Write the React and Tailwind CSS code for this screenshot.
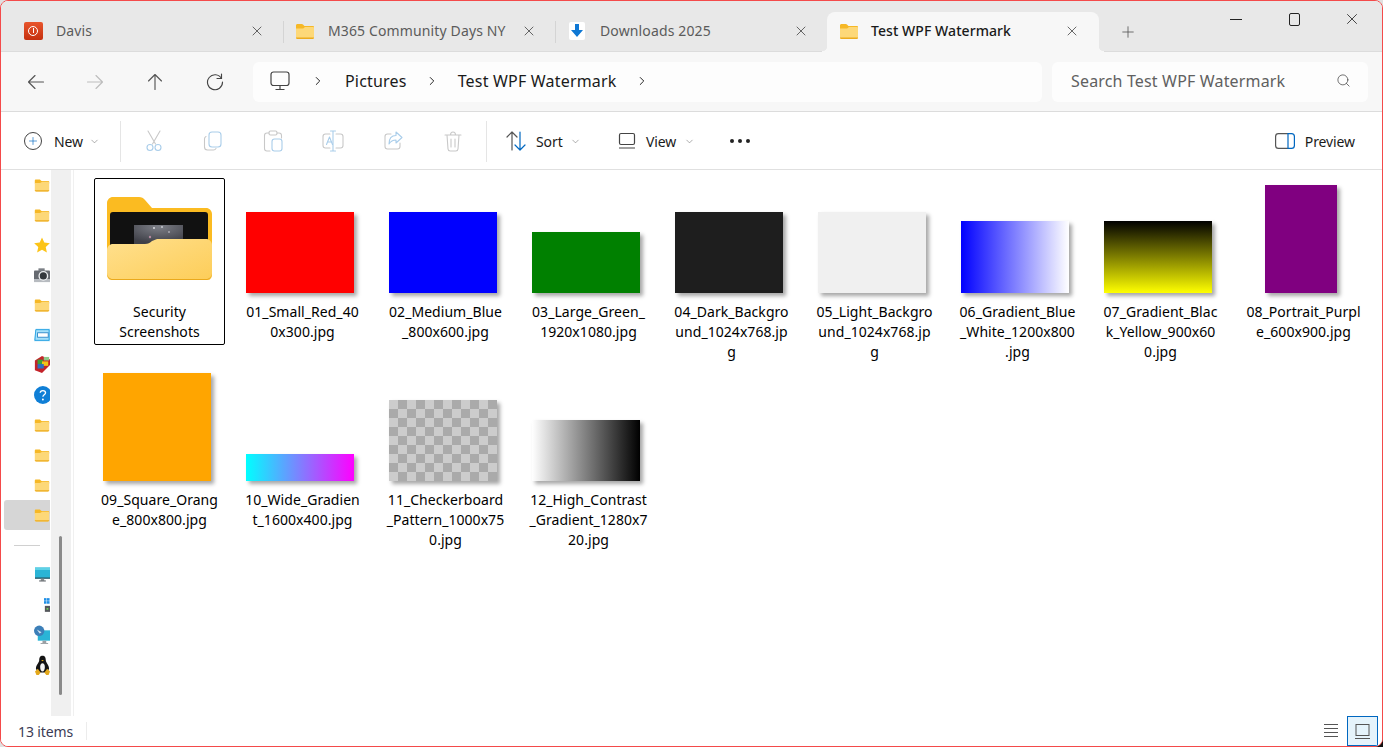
import React from 'react';
import { ChevronDown, ChevronRight, X, Plus, Search } from 'lucide-react';

const BLUE = '#0067c0';
const DIS = '#c8c8c8';
const DISB = '#a9cdea';

function TabFolder({ className = '' }) {
  return (
    <svg className={className} width="20" height="18" viewBox="0 0 20 18">
      <path d="M1 3.500C1 2.700 1.600 2 2.400 2h4.400c.5 0 .9.2 1.200.6L9.400 4H18c.6 0 1 .5 1 1v2H1z" fill="#f6b826" />
      <path d="M1 6.500h6.500c.5 0 .9-.2 1.300-.6L10 5h8c.6 0 1 .4 1 1v9.500c0 .8-.6 1.500-1.400 1.500H2.400C1.600 17 1 16.300 1 15.500z" fill="#fdd878" />
      <path d="M1 15.500h18c0 .8-.6 1.500-1.400 1.500H2.400C1.600 17 1 16.300 1 15.500z" fill="#ecab1e" />
    </svg>
  );
}

function Tab({ icon, label, active }) {
  if (active) {
    return (
      <div className="relative z-10 -mb-px flex h-[40px] w-[272px] items-center rounded-t-lg bg-[#f7f7f7] pb-[3px] pl-[12px] text-[#1a1a1a]">
        {/* flared corners where the tab meets the address row */}
        <div className="absolute -left-[5px] bottom-0 h-[6px] w-[5px] bg-[radial-gradient(circle_at_0_0,#e8e8e8_5px,#f7f7f7_5.5px)]" />
        <div className="absolute -right-[5px] bottom-0 h-[6px] w-[5px] bg-[radial-gradient(circle_at_100%_0,#e8e8e8_5px,#f7f7f7_5.5px)]" />
        <div className="flex w-[20px] justify-center">{icon}</div>
        <span className="ml-[12px] w-[193px] whitespace-nowrap text-[14px] font-medium tracking-[0.07px]">{label}</span>
        <X size={16} strokeWidth={1.1} color="#333" />
      </div>
    );
  }
  return (
    <div className="flex h-[39px] w-[271px] items-center pb-[2px] pl-[11px] text-[#5b5b5b]">
      <div className="flex w-[20px] justify-center">{icon}</div>
      <span className="ml-[13px] w-[193px] whitespace-nowrap text-[14px] tracking-[0.13px]">{label}</span>
      <X size={16} strokeWidth={1.1} color="#333" />
    </div>
  );
}

function ToolIcon({ children, w = 20 }) {
  return (
    <svg width={w} height="22" viewBox={`0 0 ${w} 22`} fill="none" strokeWidth="1.1" strokeLinecap="round" strokeLinejoin="round">
      {children}
    </svg>
  );
}

function Cut() {
  return (
    <ToolIcon>
      <path d="M4 1l7.500 13M16 1L8.500 14" stroke={DIS} />
      <circle cx="6" cy="17.500" r="3" stroke={DISB} />
      <circle cx="14" cy="17.500" r="3" stroke={DISB} />
    </ToolIcon>
  );
}
function CopyI() {
  return (
    <ToolIcon>
      <path d="M3 6.500C2 7 1.500 8 1.500 9v8c0 2 1 3 3 3h6c1.200 0 2-.6 2.500-1.500" stroke={DIS} />
      <rect x="6" y="2" width="12" height="15" rx="3" stroke={DISB} />
    </ToolIcon>
  );
}
function Paste() {
  return (
    <ToolIcon>
      <path d="M6 3H4C2.500 3 1.500 4 1.500 5.500v13C1.500 20 2.500 21 4 21h3M14 3h2c1.500 0 2.500 1 2.500 2.500V8" stroke={DIS} />
      <rect x="6" y="1" width="8" height="4" rx="1.500" stroke={DIS} />
      <rect x="9" y="9" width="10" height="12" rx="2.500" stroke={DISB} />
    </ToolIcon>
  );
}
function Rename() {
  return (
    <ToolIcon w={22}>
      <path d="M8 4H3.500C2 4 1 5 1 6.500v9C1 17 2 18 3.500 18H8M14 4h4.500C20 4 21 5 21 6.500v9c0 1.500-1 2.500-2.500 2.500H14" stroke={DIS} />
      <path d="M11 1v20M8.500 1h5M8.500 21h5" stroke={DISB} />
      <path d="M4.500 14.500L7.500 7l3 7.500M5.500 12h4" stroke={DISB} />
    </ToolIcon>
  );
}
function Share() {
  return (
    <ToolIcon>
      <path d="M8 4H4.500C3 4 2 5 2 6.500v10C2 18 3 19 4.500 19h10c1.500 0 2.500-1 2.500-2.500V13" stroke={DIS} />
      <path d="M13 2l6 5.500-6 5.500V10c-3.500 0-5.500 1.500-7 4 0-5 2.500-8.500 7-8.500z" stroke={DISB} />
    </ToolIcon>
  );
}
function Trash() {
  return (
    <ToolIcon>
      <path d="M2 5h16M7.500 5c0-2 1-3 2.500-3s2.500 1 2.500 3M4 5l1 14c.1 1.200 1 2 2.200 2h5.600c1.200 0 2.100-.8 2.200-2l1-14M8 9v8M12 9v8" stroke={DIS} />
    </ToolIcon>
  );
}

function Sep() {
  return <div className="h-[41px] w-px bg-[#e5e5e5]" />;
}

function NavArrow({ color, rotate = '' }) {
  return (
    <svg className={rotate} width="18" height="18" viewBox="0 0 18 18" fill="none" stroke={color} strokeWidth="1.150" strokeLinecap="round" strokeLinejoin="round">
      <path d="M16.500 9h-15M8 2.500L1.500 9 8 15.500" />
    </svg>
  );
}

function DimChevron() {
  return <ChevronDown size={11} strokeWidth={1.3} color="#777" />;
}

function SideFolder() {
  return <TabFolder />;
}
function Star() {
  return (
    <svg width="18" height="18" viewBox="0 0 18 18">
      <path d="M9 .5l2.600 5.800 6.200.7-4.600 4.200 1.300 6.200L9 14.300l-5.500 3.100 1.300-6.200L.2 7l6.200-.7z" fill="#fcc419" />
    </svg>
  );
}
function Camera() {
  return (
    <svg width="18" height="16" viewBox="0 0 18 16">
      <rect x="0" y="3" width="18" height="13" rx="1" fill="#666a70" />
      <rect x="5" y="0.500" width="7" height="3" fill="#7b7f85" />
      <rect x="0" y="12.500" width="18" height="3.500" fill="#b7bbc0" />
      <circle cx="10.500" cy="9" r="5.500" fill="#eef0f2" />
      <circle cx="10.500" cy="9" r="4" fill="#34383d" />
    </svg>
  );
}
function DriveBlue() {
  return (
    <svg width="18" height="14" viewBox="0 0 18 14">
      <path d="M2 0h16v14H0z" fill="#a5e0fa" />
      <path d="M2 1h15v12H1z" fill="none" stroke="#1e9de0" />
      <rect x="4" y="4.500" width="12" height="5" fill="#fff" stroke="#2a86c8" />
    </svg>
  );
}
function Cube() {
  return (
    <svg width="18" height="19" viewBox="0 0 18 19">
      <path d="M1 5l8-5 9 4v6L9 19l-8-3z" fill="#c4232a" />
      <rect x="4" y="4" width="6" height="5" fill="#3fa037" />
      <rect x="9" y="6" width="7" height="5" fill="#f2c51a" />
      <rect x="4" y="9" width="7" height="5" fill="#2d6fc2" />
      <rect x="11" y="1" width="6" height="4" fill="#8fc98a" />
    </svg>
  );
}
function Help() {
  return (
    <svg width="18" height="20" viewBox="0 0 18 20">
      <circle cx="10" cy="10" r="10" fill="#0f7fd6" />
      <path d="M7 7.500C7 5.800 8.300 5 10 5s3 .9 3 2.500c0 2.300-3 2.300-3 4.500" fill="none" stroke="#fff" strokeWidth="1.500" />
      <circle cx="10" cy="15" r="1.100" fill="#fff" />
    </svg>
  );
}
function Monitor() {
  return (
    <svg width="18" height="18" viewBox="0 0 18 18">
      <rect x="0" y="0" width="18" height="13" fill="#2ab4d6" />
      <path d="M0 0h18v3H0z" fill="#5ed1e6" />
      <rect x="0" y="12" width="18" height="1.500" fill="#24505f" />
      <rect x="7" y="13.500" width="4" height="2.500" fill="#8a8f94" />
      <rect x="5" y="15.500" width="8" height="1.300" fill="#5e6368" />
    </svg>
  );
}
function WinDrive() {
  return (
    <svg className="ml-[9px]" width="7" height="16" viewBox="0 0 7 16">
      <rect x="0" y="0" width="3" height="3" fill="#1f8fe6" />
      <rect x="3.500" y="0" width="3" height="3" fill="#1f8fe6" />
      <rect x="0" y="3.500" width="3" height="3" fill="#1f8fe6" />
      <rect x="3.500" y="3.500" width="3" height="3" fill="#1f8fe6" />
      <rect x="1" y="9" width="6" height="7" fill="#55585c" />
      <rect x="3" y="11.500" width="2" height="2" fill="#6fd35a" />
    </svg>
  );
}
function NetMonitor() {
  return (
    <svg width="17" height="21" viewBox="0 0 17 21">
      <rect x="4" y="5" width="13" height="11" fill="#2ab4d6" />
      <rect x="9" y="16" width="4" height="2.500" fill="#9a9fa4" />
      <rect x="7" y="18.500" width="8" height="1" fill="#9a9fa4" />
      <circle cx="5.500" cy="5.500" r="5.500" fill="#3c7fb8" />
      <path d="M3 4l5 3-2 1.500z" fill="#d7e6f2" />
    </svg>
  );
}
function Tux() {
  return (
    <svg width="16" height="21" viewBox="0 0 16 21">
      <path d="M8 0c3 0 3.500 2.500 3.500 5 0 2.500 3.500 5 3.500 9l-2 4H3l-2-4c0-4 3.500-6.500 3.500-9C4.500 2.500 5 0 8 0z" fill="#141414" />
      <path d="M5.500 12c0-2.500 1-4 2.500-4s2.500 1.500 2.500 4-1 5-2.500 5-2.500-2.500-2.500-5z" fill="#f4f4f4" />
      <path d="M6.500 4.500h3L8 6z" fill="#e3a81c" />
      <path d="M0 17l3-3 3 4-2 2.500H1.500zM16 17l-3-3-3 4 2 2.500h2.500z" fill="#e3a81c" />
    </svg>
  );
}

const sideRows = [
  <SideFolder />, <SideFolder />, <Star />, <Camera />, <SideFolder />, <DriveBlue />, <Cube />, <Help />,
  <SideFolder />, <SideFolder />, <SideFolder />,
];

function BigFolder() {
  return (
    <svg width="105" height="83" viewBox="0 0 105 83">
      <defs>
        <linearGradient id="fr" x1="0" y1="0" x2="1" y2="1">
          <stop offset="0" stopColor="#ffe08e" />
          <stop offset="1" stopColor="#fdcd58" />
        </linearGradient>
        <radialGradient id="ph" cx="0.5" cy="0.1" r="0.8">
          <stop offset="0" stopColor="#7d7f87" />
          <stop offset="1" stopColor="#3f4048" />
        </radialGradient>
      </defs>
      <path d="M0 6C0 2.700 2.700 0 6 0h26c2.500 0 4.500 1 6 3l7 8h54c3.300 0 6 2.700 6 6v40H0z" fill="#fbbb21" />
      <rect x="3" y="15" width="98" height="40" rx="3" fill="#111" />
      <rect x="27" y="28" width="49" height="20" fill="url(#ph)" />
      <circle cx="47" cy="31" r="1" fill="#d8d8de" />
      <circle cx="55" cy="30" r="1" fill="#c6c8d0" />
      <circle cx="62" cy="35" r="1" fill="#a8a9b2" />
      <circle cx="43" cy="40" r="1.200" fill="#b48aa0" />
      <path d="M0 53c0-3.300 2.700-6 6-6h32c3 0 5-1 7-3l2-.8c1.500-.8 3-1.200 5-1.200h47c3.300 0 6 2.700 6 6v30c0 3.300-2.700 6-6 6H6c-3.300 0-6-2.700-6-6z" fill="url(#fr)" />
      <path d="M0 77c0 3.300 2.700 6 6 6h93c3.300 0 6-2.700 6-6v-1c0 3.300-2.700 6-6 6H6c-3.300 0-6-2.700-6-6z" fill="#eaa91c" />
    </svg>
  );
}

const shadow = 'shadow-[3px_3px_4px_rgba(0,0,0,0.35)]';

const files = [
  { thumb: 'h-[81px] w-[108px] bg-[#ff0000]', lines: ['01_Small_Red_40', '0x300.jpg'] },
  { thumb: 'h-[81px] w-[108px] bg-[#0000ff]', lines: ['02_Medium_Blue', '_800x600.jpg'] },
  { thumb: 'h-[61px] w-[108px] bg-[#008000]', lines: ['03_Large_Green_', '1920x1080.jpg'] },
  { thumb: 'h-[81px] w-[108px] bg-[#1e1e1e]', lines: ['04_Dark_Backgro', 'und_1024x768.jp', 'g'] },
  { thumb: 'h-[81px] w-[108px] bg-[#f0f0f0]', lines: ['05_Light_Backgro', 'und_1024x768.jp', 'g'] },
  { thumb: 'h-[72px] w-[108px] bg-[linear-gradient(to_right,#0000ff,#ffffff)]', lines: ['06_Gradient_Blue', '_White_1200x800', '.jpg'] },
  { thumb: 'h-[72px] w-[108px] bg-[linear-gradient(to_bottom,#000000,#ffff00)]', lines: ['07_Gradient_Blac', 'k_Yellow_900x60', '0.jpg'] },
  { thumb: 'h-[108px] w-[72px] bg-[#800080]', lines: ['08_Portrait_Purpl', 'e_600x900.jpg'] },
  { thumb: 'h-[108px] w-[108px] bg-[#ffa500]', lines: ['09_Square_Orang', 'e_800x800.jpg'] },
  { thumb: 'h-[27px] w-[108px] bg-[linear-gradient(to_right,#00ffff,#ff00ff)]', lines: ['10_Wide_Gradien', 't_1600x400.jpg'] },
  { thumb: 'h-[81px] w-[108px] bg-[repeating-conic-gradient(#aaaaaa_0_25%,#cccccc_0_50%)] bg-[length:18px_18px]', lines: ['11_Checkerboard', '_Pattern_1000x75', '0.jpg'] },
  { thumb: 'h-[61px] w-[108px] bg-[linear-gradient(to_right,#ffffff,#000000)]', lines: ['12_High_Contrast', '_Gradient_1280x7', '20.jpg'] },
];

function Label({ lines }) {
  return (
    <div className="pt-[9px] text-center text-[14px] leading-[20px] tracking-[0.05px] text-black">
      {lines.map((l) => (
        <div key={l} className="whitespace-nowrap">{l}</div>
      ))}
    </div>
  );
}

export default function App() {
  return (
    <div className="h-[747px] w-[1383px] overflow-hidden bg-[linear-gradient(135deg,#e0e0e0_99.5%,#111111_99.5%)] font-['Noto_Sans','Open_Sans',sans-serif]">
      <div className="flex h-full flex-col overflow-hidden rounded-lg border border-[#f44a4a] bg-white">
        {/* tabs */}
        <div className="flex h-[50px] shrink-0 bg-[#e8e8e8] pl-[11px]">
          <div className="flex items-end">
            <Tab
              label="Davis"
              icon={
                <div className="flex h-[18px] w-[19px] items-center justify-center rounded-[2px] bg-[linear-gradient(to_bottom,#e8552c,#c5300f)]">
                  <div className="flex h-[10px] w-[10px] items-center justify-center rounded-full border border-white">
                    <div className="h-[5px] w-px bg-white" />
                  </div>
                </div>
              }
            />
            <div className="mb-[8px] h-[22px] w-px bg-[#d4d4d4]" />
            <Tab label="M365 Community Days NY" icon={<TabFolder />} />
            <div className="mb-[8px] h-[22px] w-px bg-[#d4d4d4]" />
            <Tab
              label="Downloads 2025"
              icon={
                <div className="flex h-[18px] w-[16px] items-center justify-center rounded-[2px] bg-white">
                  <svg width="12" height="13" viewBox="0 0 12 13"><path d="M4 0h4v6h4l-6 7-6-7h4z" fill="#0f78d4" /></svg>
                </div>
              }
            />
            <Tab active label="Test WPF Watermark" icon={<TabFolder />} />
          </div>
          <div className="ml-[20px] flex h-[50px] items-end pb-[10px]">
            <Plus size={18} strokeWidth={1.1} color="#555" />
          </div>
          <div className="ml-auto flex h-[36px] items-center">
            <div className="flex w-[58px] justify-center pr-[2px]"><div className="h-px w-[12px] bg-[#222]" /></div>
            <div className="flex w-[58px] justify-center pr-[2px]"><div className="h-[13px] w-[11px] rounded-[2px] border border-[#222]" /></div>
            <div className="flex w-[58px] justify-center pr-[2px]"><X size={18} strokeWidth={1.1} color="#222" /></div>
          </div>
        </div>

        {/* nav */}
        <div className="flex h-[61px] shrink-0 items-center border-t border-b border-[#dcdcdc] bg-[#f7f7f7] pl-[5px]">
          <div className="flex w-[59px] justify-center"><NavArrow color="#555" /></div>
          <div className="flex w-[60px] justify-center"><NavArrow color="#bdbdbd" rotate="rotate-180" /></div>
          <div className="flex w-[60px] justify-center"><NavArrow color="#555" rotate="rotate-90" /></div>
          <div className="flex w-[60px] justify-center">
            <svg width="18" height="18" viewBox="0 0 18 18" fill="none" stroke="#444" strokeWidth="1.150" strokeLinecap="round">
              <path d="M15.500 5.500A7.500 7.500 0 1 0 16.500 9" />
              <path d="M11 5.500h4.500V1" />
            </svg>
          </div>
          <div className="ml-[8px] flex h-[40px] w-[789px] items-center rounded-md bg-[#fdfdfd] pb-[2px] pl-[17px] text-[16px] tracking-[0.19px] text-[#1a1a1a]">
            <svg width="20" height="20" viewBox="0 0 20 20" fill="none" stroke="#444" strokeWidth="1.200">
              <rect x="1" y="1" width="18" height="13.500" rx="2.500" />
              <path d="M10 15v3M5.500 18.500h9" />
            </svg>
            <ChevronRight className="ml-[21px]" size={14} strokeWidth={1.7} color="#222" />
            <span className="ml-[20px]">Pictures</span>
            <ChevronRight className="ml-[18px]" size={14} strokeWidth={1.7} color="#222" />
            <span className="ml-[19px]">Test WPF Watermark</span>
            <ChevronRight className="ml-[18px]" size={14} strokeWidth={1.7} color="#222" />
          </div>
          <div className="ml-[10px] flex h-[40px] w-[316px] items-center rounded-md bg-[#fdfdfd] pb-[2px] pl-[19px] pr-[17px] text-[16px] tracking-[0.16px] text-[#606060]">
            <span className="flex-1 whitespace-nowrap">Search Test WPF Watermark</span>
            <Search size={15} strokeWidth={1.2} color="#444" />
          </div>
        </div>

        {/* toolbar */}
        <div className="flex h-[58px] shrink-0 items-center border-b border-[#e0e0e0] bg-white pl-[23px] pt-[1px] text-[14px] tracking-[-0.1px] text-[#1a1a1a]">
          <div className="flex h-[18px] w-[18px] items-center justify-center rounded-full border border-[#444]">
            <Plus size={12} strokeWidth={1.3} color={BLUE} />
          </div>
          <span className="ml-[12px] w-[35px]">New</span>
          <DimChevron />
          <div className="ml-[20px]"><Sep /></div>
          <div className="flex w-[62px] justify-center pl-[3px]"><Cut /></div>
          <div className="flex w-[60px] justify-center"><CopyI /></div>
          <div className="flex w-[60px] justify-center"><Paste /></div>
          <div className="flex w-[60px] justify-center"><Rename /></div>
          <div className="flex w-[60px] justify-center"><Share /></div>
          <div className="flex w-[60px] justify-center"><Trash /></div>
          <div className="ml-[3px]"><Sep /></div>
          <svg className="ml-[19px]" width="21" height="20" viewBox="0 0 21 20" fill="none" strokeWidth="1.200" strokeLinecap="round" strokeLinejoin="round">
            <path d="M6 19V1M1 6l5-5 5 5" stroke="#555" />
            <path d="M14 1v18M9 14l5 5 5-5" stroke={BLUE} />
          </svg>
          <span className="ml-[9px] w-[34px]">Sort</span>
          <DimChevron />
          <svg className="ml-[37px]" width="18" height="18" viewBox="0 0 18 18" fill="none" stroke="#444" strokeWidth="1.200">
            <rect x="1.500" y="1.500" width="15" height="11" rx="1.500" />
            <path d="M1 16h16" />
          </svg>
          <span className="ml-[10px] w-[38px]">View</span>
          <DimChevron />
          <div className="ml-[35px] flex gap-[4px]">
            <div className="h-[4px] w-[4px] rounded-full bg-[#222]" />
            <div className="h-[4px] w-[4px] rounded-full bg-[#222]" />
            <div className="h-[4px] w-[4px] rounded-full bg-[#222]" />
          </div>
          <div className="ml-auto flex items-center pr-[27px]">
            <svg width="20" height="16" viewBox="0 0 20 16" fill="none" strokeWidth="1.200">
              <path d="M13 .6H3.500C1.800.6.600 1.800.600 3.500v9c0 1.700 1.200 2.900 2.900 2.900H13" stroke="#555" />
              <path d="M13 .6h3.500c1.700 0 2.900 1.200 2.900 2.900v9c0 1.700-1.200 2.900-2.900 2.900H13z" stroke={BLUE} />
            </svg>
            <span className="ml-[10px]">Preview</span>
          </div>
        </div>

        {/* body */}
        <div className="flex min-h-0 flex-1">
          <div className="w-[49px] shrink-0 overflow-hidden bg-white">
            {sideRows.map((icon, i) => (
              <div key={i} className="flex h-[30px] items-center pb-[1px] pl-[33px]">{icon}</div>
            ))}
            <div className="ml-[3px] flex h-[30px] items-center rounded-l-[3px] bg-[#d6d6d6] pb-[1px] pl-[30px]"><SideFolder /></div>
            <div className="flex h-[30px] items-center pl-[13px]"><div className="h-px w-[26px] bg-[#d0d0d0]" /></div>
            <div className="flex h-[30px] items-center pl-[34px]"><Monitor /></div>
            <div className="flex h-[30px] items-center pl-[34px]"><WinDrive /></div>
            <div className="flex h-[30px] items-center pl-[33px]"><NetMonitor /></div>
            <div className="flex h-[30px] items-center pl-[34px]"><Tux /></div>
          </div>
          <div className="relative ml-[1px] w-[20px] shrink-0 bg-[#f0f0f0]">
            <div className="absolute left-[8px] top-[366px] h-[159px] w-[3px] rounded-full bg-[#8a8a8a]" />
          </div>
          <div className="ml-[2px] min-w-0 flex-1 border-l border-[#f0f0f0] pl-[20px] pt-[8px]">
            <div className="grid grid-cols-[repeat(9,131px)] gap-x-[12px] gap-y-[21px]">
              <div className="h-[167px] rounded-[2px] border border-black">
                <div className="flex h-[101px] items-end justify-center"><BigFolder /></div>
                <div className="pt-[22px] text-center text-[14px] leading-[20px] tracking-[0.05px] text-black">
                  <div>Security</div>
                  <div>Screenshots</div>
                </div>
              </div>
              {files.map((f) => (
                <div key={f.lines[0]} className="h-[167px]">
                  <div className="flex h-[115px] items-end justify-center pr-[5px]">
                    <div className={`${f.thumb} ${shadow}`} />
                  </div>
                  <Label lines={f.lines} />
                </div>
              ))}
            </div>
          </div>
        </div>

        {/* status */}
        <div className="flex h-[30px] shrink-0 items-center bg-white pl-[17px] text-[14px] tracking-[-0.1px] text-[#3b3b55]">
          <span className="w-[68px]">13 items</span>
          <div className="h-[18px] w-px bg-[#ececec]" />
          <div className="ml-auto flex items-center pr-[4px]">
            <svg width="14" height="14" viewBox="0 0 14 14" stroke="#555" strokeWidth="1">
              <path d="M0 .5h14M0 4.500h14M0 8.500h14M0 12.500h14" />
            </svg>
            <div className="ml-[9px] flex h-[30px] w-[31px] items-center justify-center border border-[#0067c0] bg-[#e5f3fb]">
              <svg width="15" height="15" viewBox="0 0 15 15" fill="none" stroke="#555" strokeWidth="1">
                <rect x="1" y="0.500" width="13" height="11" />
                <path d="M0 14.500h15" />
              </svg>
            </div>
          </div>
        </div>
      </div>
    </div>
  );
}
